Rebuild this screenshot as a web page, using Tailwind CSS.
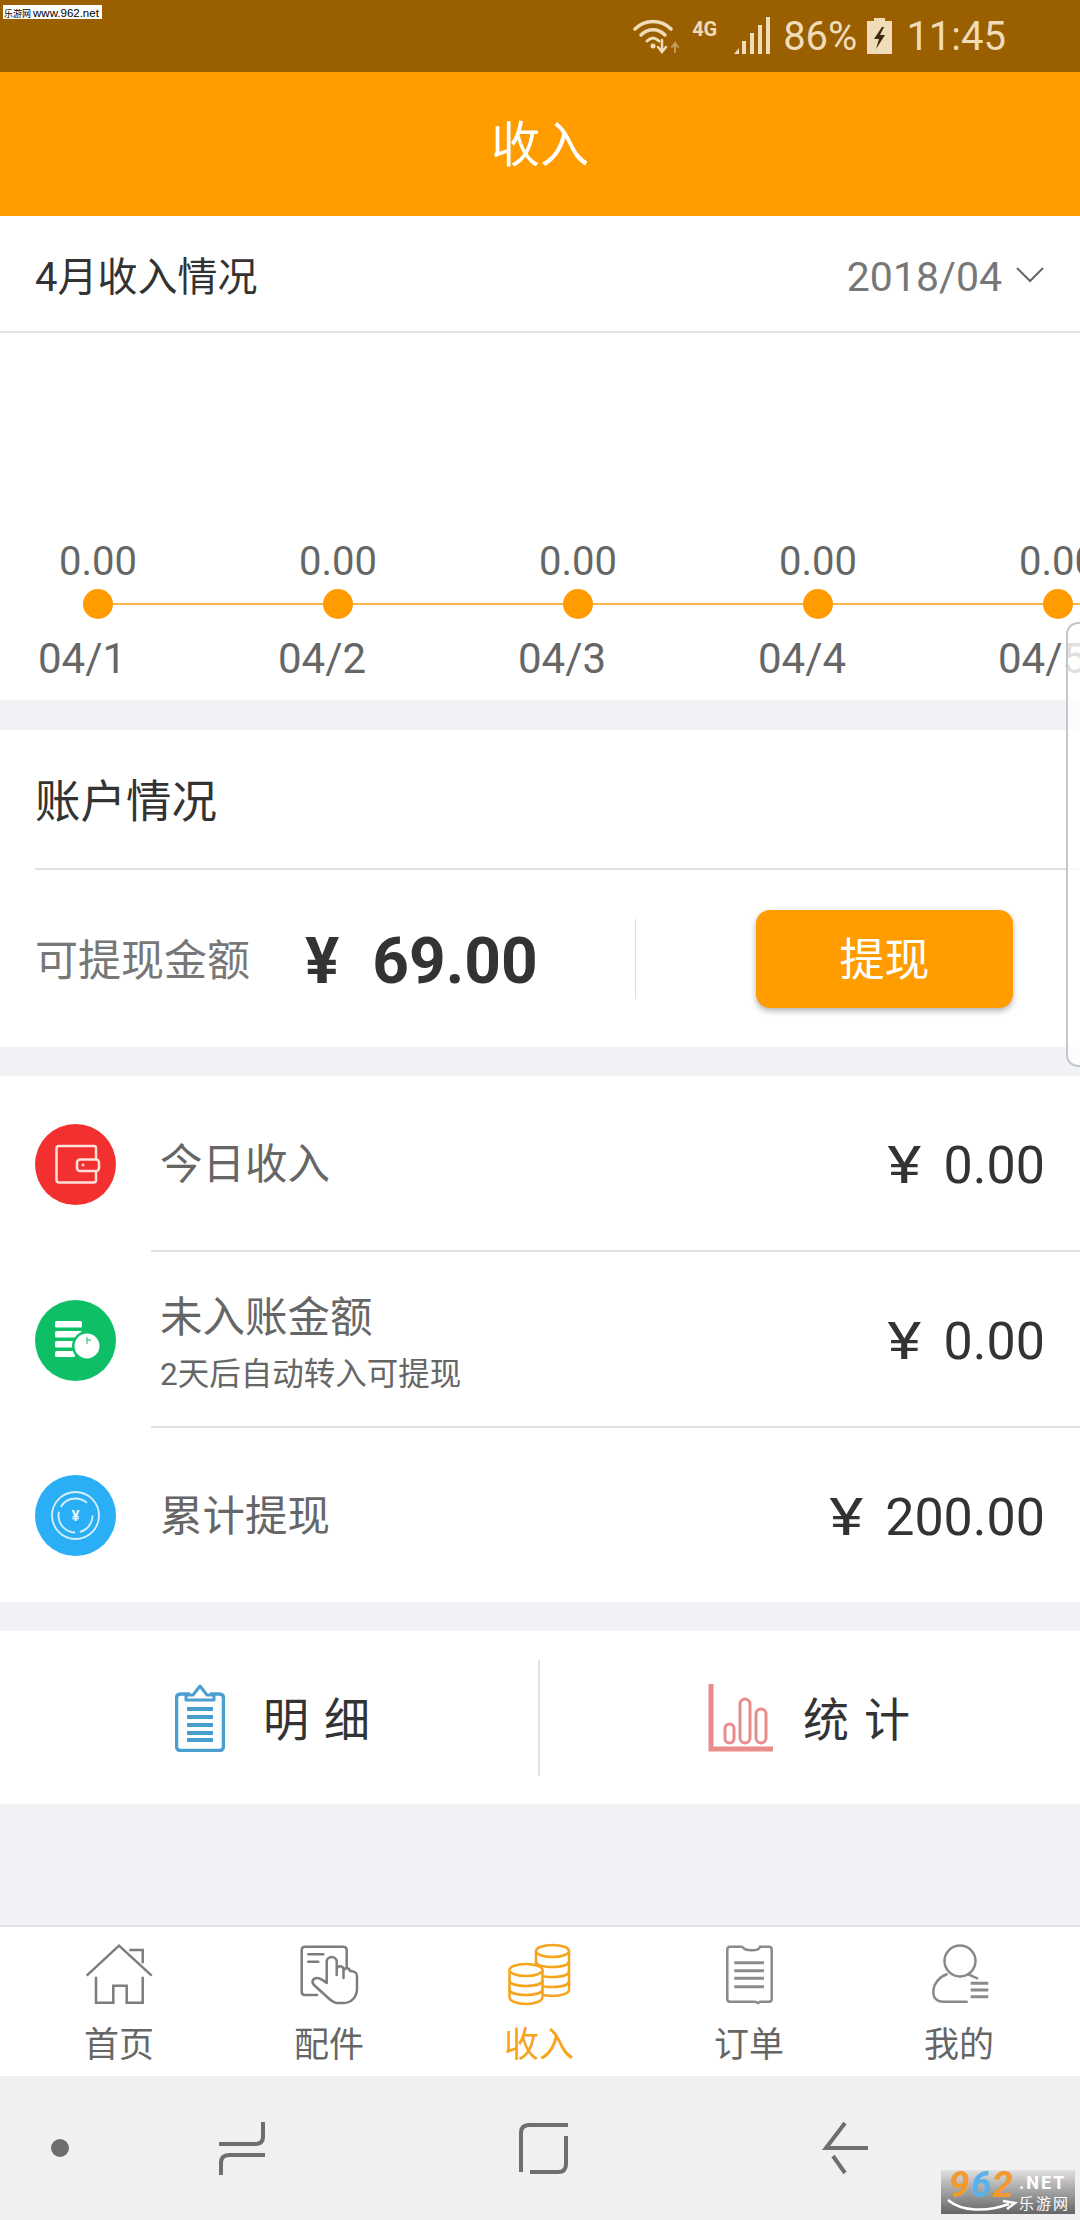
<!DOCTYPE html>
<html lang="en">
<head>
    <meta charset="UTF-8">
    <meta name="viewport" content="width=device-width, initial-scale=1.0">
    <title>收入</title>
    <script src="https://cdn.jsdelivr.net/npm/@tailwindcss/browser@4"></script>
</head>
<body class="bg-[#f0f2f5] font-[Roboto,'Noto_Sans_CJK_SC',sans-serif] text-[#333]">
<div class="relative w-[1080px] h-[2220px] overflow-hidden flex flex-col">

    <!-- Status bar -->
    <div class="h-[72px] bg-[#995f00] flex items-center justify-end pr-[74px] text-[#f0dcb8]">
        <svg width="48" height="40" viewBox="0 0 48 40" fill="none" stroke="#f0dcb8" stroke-linecap="round">
            <path d="M2 13 C12 3 28 3 38 13" stroke-width="3.5"/>
            <path d="M8 19 C15 12 25 12 32 19" stroke-width="3.5"/>
            <path d="M14 25 C18 21 22 21 26 25" stroke-width="3"/>
            <circle cx="20" cy="30" r="2.5" fill="#f0dcb8" stroke="none"/>
            <path d="M29 24 V35 M25 31 L29 36 L33 31" stroke-width="2.5"/>
            <path d="M42 36 V28 M39 31 L42 27 L45 31" stroke-width="2" opacity="0.5"/>
        </svg>
        <span class="ml-[11px] mb-[14px] text-[20px] leading-none font-bold w-[28px] whitespace-nowrap">4G</span>
        <svg class="ml-[14px]" width="36" height="38" viewBox="0 0 36 38" fill="#f0dcb8">
            <path d="M0 37 L5 31 V37 Z"/>
            <rect x="8" y="24" width="4" height="13"/>
            <rect x="16" y="16" width="4" height="21"/>
            <rect x="24" y="8" width="4" height="29"/>
            <rect x="32" y="0" width="4" height="37"/>
        </svg>
        <span class="ml-[13px] pt-[2px] text-[40px] leading-none">86%</span>
        <svg class="ml-[10px]" width="25" height="36" viewBox="0 0 25 36">
            <path d="M7 0 H18 V3 H25 V36 H0 V3 H7 Z" fill="#f0dcb8"/>
            <path d="M15 9 L7 21 H12 L9 31 L18 17 H13 L17 9 Z" fill="#3a2a10"/>
        </svg>
        <span class="ml-[14px] pt-[2px] text-[40px] leading-none">11:45</span>
    </div>

    <!-- Title -->
    <div class="h-[144px] pt-[4px] bg-[#ff9c00] flex items-center justify-center text-white text-[49px]">收入</div>

    <!-- Month row -->
    <div class="h-[117px] pt-[8px] bg-white border-b-2 border-[#e2e2e2] flex items-center justify-between pl-[35px] pr-[36px]">
        <span class="text-[40px]">4月收入情况</span>
        <div class="flex items-center text-[#777]">
            <span class="text-[41px]">2018/04</span>
            <svg class="ml-[14px] mb-[6px]" width="28" height="16" viewBox="0 0 28 16" fill="none" stroke="#666" stroke-width="2"><path d="M1 1 L14 14 L27 1"/></svg>
        </div>
    </div>

    <!-- Chart -->
    <div class="relative h-[367px] bg-white overflow-hidden pt-[205px] text-[#666]">
        <div class="absolute left-[98px] right-0 top-[270px] h-[2px] bg-[#f7b548]"></div>
        <div class="relative flex -ml-[22px] w-[1300px]">
            <div class="w-[240px] flex flex-col items-center">
                <div class="h-[44px] pt-[2px] leading-[44px] text-[40px]">0.00</div>
                <div class="mt-[7px] w-[30px] h-[30px] rounded-full bg-[#ff9c00]"></div>
                <div class="mt-[15px] h-[50px] leading-[50px] text-[42px] -translate-x-[16px]">04/1</div>
            </div>
            <div class="w-[240px] flex flex-col items-center">
                <div class="h-[44px] pt-[2px] leading-[44px] text-[40px]">0.00</div>
                <div class="mt-[7px] w-[30px] h-[30px] rounded-full bg-[#ff9c00]"></div>
                <div class="mt-[15px] h-[50px] leading-[50px] text-[42px] -translate-x-[16px]">04/2</div>
            </div>
            <div class="w-[240px] flex flex-col items-center">
                <div class="h-[44px] pt-[2px] leading-[44px] text-[40px]">0.00</div>
                <div class="mt-[7px] w-[30px] h-[30px] rounded-full bg-[#ff9c00]"></div>
                <div class="mt-[15px] h-[50px] leading-[50px] text-[42px] -translate-x-[16px]">04/3</div>
            </div>
            <div class="w-[240px] flex flex-col items-center">
                <div class="h-[44px] pt-[2px] leading-[44px] text-[40px]">0.00</div>
                <div class="mt-[7px] w-[30px] h-[30px] rounded-full bg-[#ff9c00]"></div>
                <div class="mt-[15px] h-[50px] leading-[50px] text-[42px] -translate-x-[16px]">04/4</div>
            </div>
            <div class="w-[240px] flex flex-col items-center">
                <div class="h-[44px] pt-[2px] leading-[44px] text-[40px]">0.00</div>
                <div class="mt-[7px] w-[30px] h-[30px] rounded-full bg-[#ff9c00]"></div>
                <div class="mt-[15px] h-[50px] leading-[50px] text-[42px] -translate-x-[16px]">04/5</div>
            </div>
        </div>
    </div>

    <!-- Account -->
    <div class="mt-[30px] h-[317px] bg-white pl-[35px]">
        <div class="h-[140px] pt-[8px] border-b-2 border-[#e2e2e2] flex items-center text-[45.5px]">账户情况</div>
        <div class="h-[177px] flex items-center">
            <span class="w-[270px] pt-[6px] text-[43px] text-[#777]">可提现金额</span>
            <span class="w-[330px] pt-[6px] text-[64px] font-bold leading-none"><span class="mr-[33px]">¥</span>69.00</span>
            <div class="w-[1px] h-[80px] bg-[#ddd]"></div>
            <div class="ml-[120px] w-[257px] h-[98px] pt-[4px] rounded-[14px] bg-[#ff9c00] shadow-[0_3px_6px_rgba(0,0,0,0.3)] flex items-center justify-center text-white text-[45px]">提现</div>
        </div>
    </div>

    <!-- Income list -->
    <div class="mt-[29px] bg-white">
        <div class="h-[176px] flex">
            <div class="w-[151px] pl-[35px] flex items-center">
                <svg width="81" height="81" viewBox="0 0 81 81">
                    <circle cx="40.5" cy="40.5" r="40.5" fill="#f23030"/>
                    <path d="M61 35 V24 Q61 22 59 22 H24 Q21.500 22 21.500 24.500 V56 Q21.500 58.500 24 58.500 H59 Q61 58.500 61 56 V47" fill="none" stroke="#fbe0dc" stroke-width="2.500"/>
                    <rect x="42" y="35.500" width="22" height="11.500" rx="3" fill="#f23030" stroke="#fbe0dc" stroke-width="2.500"/>
                    <circle cx="48" cy="41" r="1.500" fill="#fbe0dc"/>
                </svg>
            </div>
            <div class="flex-1 border-b-2 border-[#e2e2e2] flex items-center justify-between pl-[9px] pr-[35px]">
                <span class="pt-[4px] text-[42.5px] text-[#666]">今日收入</span>
                <span class="pt-[6px] text-[52px] leading-none"><span class="inline-block scale-x-125 origin-right mr-[22px]">¥</span>0.00</span>
            </div>
        </div>
        <div class="h-[176px] flex">
            <div class="w-[151px] pl-[35px] flex items-center">
                <svg width="81" height="81" viewBox="0 0 81 81">
                    <circle cx="40.5" cy="40.5" r="40.5" fill="#0fbf67"/>
                    <rect x="20" y="21" width="27" height="6.500" rx="1.500" fill="#fff"/>
                    <rect x="20" y="31" width="27" height="6.500" rx="1.500" fill="#fff"/>
                    <rect x="20" y="41" width="20" height="6.500" rx="1.500" fill="#fff"/>
                    <rect x="20" y="51" width="20" height="6" rx="1.500" fill="#fff"/>
                    <circle cx="52" cy="46" r="15" fill="#0fbf67"/>
                    <circle cx="52" cy="46" r="12.500" fill="#fff"/>
                    <path d="M52 37 V44 M52 40 H56" stroke="#0fbf67" stroke-width="1" fill="none"/>
                </svg>
            </div>
            <div class="flex-1 border-b-2 border-[#e2e2e2] flex items-center justify-between pl-[9px] pr-[35px]">
                <div class="flex flex-col pt-[9px] text-[#666]">
                    <span class="text-[42.5px] leading-[56px]">未入账金额</span>
                    <span class="mt-[7px] text-[31.5px] leading-[44px]">2天后自动转入可提现</span>
                </div>
                <span class="pt-[6px] text-[52px] leading-none"><span class="inline-block scale-x-125 origin-right mr-[22px]">¥</span>0.00</span>
            </div>
        </div>
        <div class="h-[174px] flex">
            <div class="w-[151px] pl-[35px] flex items-center">
                <svg width="81" height="81" viewBox="0 0 81 81">
                    <circle cx="40.5" cy="40.5" r="40.5" fill="#2aaef5"/>
                    <circle cx="40.5" cy="40.5" r="23.500" fill="none" stroke="#d8f0fd" stroke-width="1.800"/>
                    <circle cx="40.5" cy="40.5" r="17" fill="none" stroke="#d8f0fd" stroke-width="1.800" stroke-dasharray="22 5 30 5 30 15"/>
                    <text x="40.5" y="46" text-anchor="middle" font-size="15" font-weight="700" fill="#e8f6fe">¥</text>
                </svg>
            </div>
            <div class="flex-1 flex items-center justify-between pl-[9px] pr-[35px]">
                <span class="pt-[4px] text-[42.5px] text-[#666]">累计提现</span>
                <span class="pt-[6px] text-[52px] leading-none"><span class="inline-block scale-x-125 origin-right mr-[22px]">¥</span>200.00</span>
            </div>
        </div>
    </div>

    <!-- Detail / stats -->
    <div class="mt-[29px] h-[173px] bg-white flex items-center">
        <div class="w-[540px] h-[116px] pl-[175px] flex items-center border-r-2 border-[#e2e2e2]">
            <svg width="50" height="68" viewBox="0 0 50 68" fill="none" stroke="#4a9fd0">
                <path d="M15 10 H6 Q1.500 10 1.500 14 V62 Q1.500 66.500 6 66.500 H44 Q48.500 66.500 48.500 62 V14 Q48.500 10 44 10 H35" stroke-width="3.500"/>
                <path d="M11 16 V11 H18 L25 2 L32 11 H39 V16 Z" stroke-width="3" stroke-linejoin="round"/>
                <path d="M12 25 H38 M12 33 H38 M12 41 H38 M12 49 H38 M12 56 H38" stroke-width="4"/>
            </svg>
            <span class="ml-[38px] pt-[6px] text-[46px] tracking-[15px]">明细</span>
        </div>
        <div class="flex-1 h-[116px] pl-[168px] flex items-center">
            <svg width="65" height="68" viewBox="0 0 65 68" fill="none" stroke="#e88c8c">
                <path d="M3 0 V65 H65" stroke-width="5"/>
                <rect x="17" y="40" width="9" height="19" rx="4.500" stroke-width="3"/>
                <rect x="32" y="15" width="10" height="44" rx="5" stroke-width="3"/>
                <rect x="48" y="25" width="10" height="34" rx="5" stroke-width="3"/>
            </svg>
            <span class="ml-[30px] pt-[6px] text-[46px] tracking-[15px]">统计</span>
        </div>
    </div>

    <div class="flex-1"></div>

    <!-- Tab bar -->
    <div class="h-[151px] bg-white border-t-2 border-[#e2e2e2] flex px-[14px] pt-[15px]">
        <div class="w-[210px] flex flex-col items-center text-[#666]">
            <svg width="80" height="64" viewBox="0 0 80 64" fill="none" stroke="#7d7d7d" stroke-width="2.500">
                <path d="M7.700 33.700 L40 3.700 L72.700 33.700"/>
                <path d="M50.300 8 H63.700 V21.300"/>
                <path d="M17 34.700 V60.700 H34.300 V43.700 H47.700 V60.700 H63.700 V34.700"/>
            </svg>
            <span class="text-[35px] leading-[46px] mt-[17px]">首页</span>
        </div>
        <div class="w-[210px] flex flex-col items-center text-[#666]">
            <svg width="80" height="64" viewBox="0 0 80 64" fill="none" stroke="#7d7d7d" stroke-width="2.500" stroke-linecap="round" stroke-linejoin="round">
                <path d="M57.700 26 V8 Q57.700 4.700 54 4.700 H16 Q12.700 4.700 12.700 8 V50 Q12.700 53 16 53 H28"/>
                <path d="M19.300 12.300 H34.300 M19.300 19.700 H29.300"/>
                <path d="M37.700 41 V20 A5 5 0 0 1 47.700 20 V33 M47.700 33 V27 A3.500 3.500 0 0 1 54.500 27 V36 M54.500 36 V30 A3 3 0 0 1 61 29 C65 29 68 31 68 34 V47 C68 55 62 61 55 61 H48 C44 61 40 57 36 53 L25 43 C22 40 24 36 28 36 C31 36 34 38 37.700 41"/>
            </svg>
            <span class="text-[35px] leading-[46px] mt-[17px]">配件</span>
        </div>
        <div class="w-[210px] flex flex-col items-center text-[#f7a41d]">
            <svg width="80" height="64" viewBox="0 0 80 64" fill="#fff" stroke="#f7a41d" stroke-width="2.500">
                <path d="M37 9 V48 C37 51 44 54 53.700 54 C63 54 70 51 70 48 V9"/>
                <ellipse cx="53.500" cy="9" rx="16.500" ry="6"/>
                <path d="M37 19 C37 23 44 25 53.700 25 C63 25 70 23 70 19 M37 29 C37 33 44 35 53.700 35 C63 35 70 33 70 29 M37 39 C37 43 44 45 53.700 45 C63 45 70 43 70 39" fill="none"/>
                <path d="M10.500 28 V55 C10.500 59 18 62 27 62 C36 62 43.500 59 43.500 55 V28"/>
                <ellipse cx="27" cy="28" rx="16.500" ry="6"/>
                <path d="M10.500 38 C10.500 42 18 44 27 44 C36 44 43.500 42 43.500 38 M10.500 47 C10.500 51 18 53 27 53 C36 53 43.500 51 43.500 47" fill="none"/>
            </svg>
            <span class="text-[35px] leading-[46px] mt-[17px]">收入</span>
        </div>
        <div class="w-[210px] flex flex-col items-center text-[#666]">
            <svg width="80" height="64" viewBox="0 0 80 64" fill="none" stroke="#8a8a8a" stroke-width="2.500">
                <path d="M33.700 4.700 H21 Q18.300 4.700 18.300 7.500 V57 Q18.300 59.700 21 59.700 H46 L49 61 L51 59.700 H60 Q62.700 59.700 62.700 57 V7.500 Q62.700 4.700 60 4.700 H51 C50 9.500 35 9.500 33.700 4.700"/>
                <path d="M25.300 20.700 H55 M25.300 28.700 H55 M25.300 36.300 H55 M25.300 44.700 H55" stroke-width="3"/>
            </svg>
            <span class="text-[35px] leading-[46px] mt-[17px]">订单</span>
        </div>
        <div class="w-[210px] flex flex-col items-center text-[#666]">
            <svg width="80" height="64" viewBox="0 0 80 64" fill="none" stroke="#8a8a8a" stroke-width="2.500" stroke-linecap="round">
                <circle cx="41" cy="19" r="15.500"/>
                <path d="M27.700 32.300 C20 35 14.300 42 14.300 50 C14.300 56 18 59.700 24.300 59.700 H47.700"/>
                <path d="M49.300 32.300 L58.300 36.300"/>
                <path d="M51.700 41.300 H69.300 M51.700 48 H69.300 M51.700 54.700 H69.300" stroke-linecap="butt" stroke-width="3"/>
            </svg>
            <span class="text-[35px] leading-[46px] mt-[17px]">我的</span>
        </div>
    </div>

    <!-- System nav -->
    <div class="h-[144px] bg-[#f0f0f0] flex items-center">
        <div class="ml-[51px] w-[18px] h-[18px] rounded-full bg-[#6e6e6e]"></div>
        <svg class="ml-[145px]" width="56" height="60" viewBox="214 2118 56 60" fill="none" stroke="#6e6e6e" stroke-width="4">
            <path d="M263 2122 V2137 Q263 2144 255 2144 H219"/>
            <path d="M265 2155 H229 Q221 2155 221 2163 V2175"/>
        </svg>
        <svg class="ml-[245px]" width="58" height="60" viewBox="515 2118 58 60" fill="none" stroke="#6e6e6e" stroke-width="4">
            <path d="M568 2125 H529 Q521 2125 521 2133 V2172"/>
            <path d="M566 2136 V2164 Q566 2172 558 2172 H530"/>
        </svg>
        <svg class="ml-[245px]" width="56" height="60" viewBox="818 2118 56 60" fill="none" stroke="#6e6e6e" stroke-width="4">
            <path d="M845 2123 L826 2148 H868"/>
            <path d="M833 2156 L845 2173"/>
        </svg>
    </div>

    <!-- Right edge handle -->
    <div class="absolute left-[1066px] top-[622px] w-[20px] h-[445px] bg-white/80 border-2 border-[#c4c7cc] rounded-l-[12px]"></div>

    <!-- Watermarks -->
    <div class="absolute left-[3px] top-[5px] w-[99px] h-[14px] bg-white text-black leading-[14px] whitespace-nowrap font-['Liberation_Sans','Noto_Sans_CJK_SC',sans-serif] pl-[1px]"><span class="text-[9px]">乐游网</span><span class="ml-[2px] text-[11.5px]">www.962.net</span></div>
    <div class="absolute left-[941px] top-[2170px] w-[134px] h-[44px] bg-gradient-to-b from-[#e0e0e0] to-[#666] overflow-hidden">
        <span class="absolute left-[8px] top-[0px] text-[37px] leading-[30px] font-bold italic tracking-[1px] text-[#f29a2e]">9<span class="text-[#5bb2ea]">6</span>2</span>
        <span class="absolute left-[78px] top-[3px] text-[18px] leading-[20px] font-bold tracking-[2px] text-white whitespace-nowrap">.NET</span>
        <span class="absolute left-[78px] top-[24px] text-[15px] leading-[20px] tracking-[2px] text-white whitespace-nowrap">乐游网</span>
        <svg class="absolute left-[6px] top-[28px]" width="72" height="16" viewBox="0 0 72 16" fill="none" stroke="#fff" stroke-width="2.500"><path d="M1 2 C15 14 40 14 62 6 M56 3 L68 5 L60 11"/></svg>
    </div>
</div>
</body>
</html>
